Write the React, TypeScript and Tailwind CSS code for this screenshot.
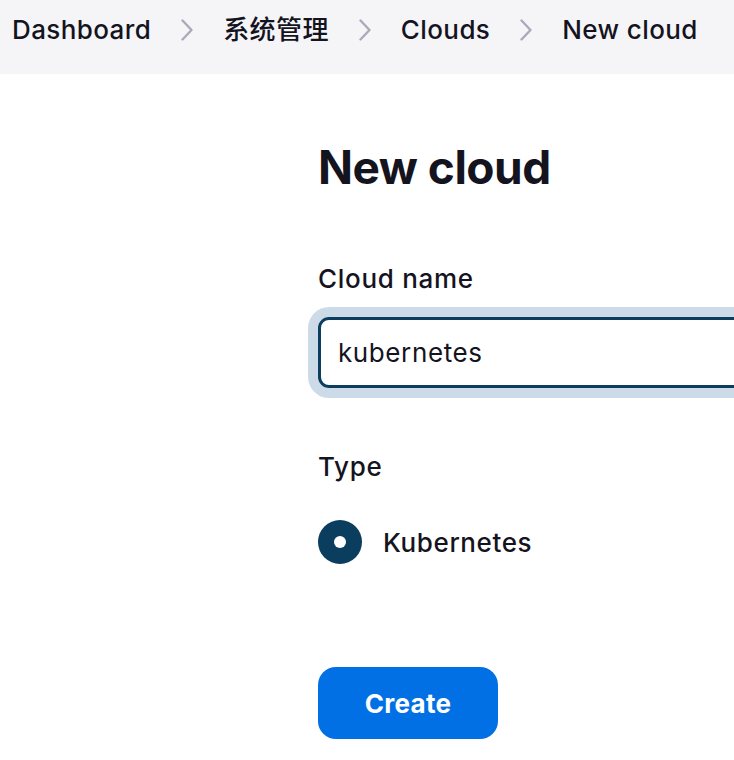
const crumbs = ["Dashboard", "系统管理", "Clouds", "New cloud"];

function Chevron() {
  return (
    <svg className="mx-[30px] h-[22px] w-[12px] text-[#abaabb]" viewBox="0 0 12 22" fill="none">
      <path d="M1.5 1.5 L10.5 11 L1.5 20.5" stroke="currentColor" strokeWidth="2.4" strokeLinecap="round" strokeLinejoin="round" />
    </svg>
  );
}

export default function App() {
  return (
    <div
      className="min-h-[760px] w-[734px] overflow-hidden bg-white text-[#14141f]"
      style={{ fontFamily: 'Inter, "Noto Sans CJK SC", sans-serif' }}
    >
      <div className="flex h-[74px] items-center bg-[#f5f5f7] pb-[15px] pl-3">
        {crumbs.map((c, i) => (
          <div key={c} className="flex items-center">
            {i > 0 && <Chevron />}
            <span className="text-[26px] font-medium leading-none tracking-[0.4px]">{c}</span>
          </div>
        ))}
      </div>

      <div className="pl-[318px] pt-[66px]">
        <h1 className="text-[46px] font-bold leading-[1.2] tracking-[-0.5px]">New cloud</h1>

        <label className="mt-[71px] block text-[26px] font-medium leading-none tracking-[0.7px]">
          Cloud name
        </label>
        <div className="mt-[25px] w-[560px]">
          <input
            defaultValue="kubernetes"
            className="h-[71px] w-full rounded-[11px] border-[3px] border-[#0b3d5f] px-[17px] text-[26px] tracking-[0.6px] shadow-[0_0_0_10px_#cddbe8] outline-none"
          />
        </div>

        <div className="mt-[66px] text-[26px] font-medium leading-none tracking-[0.7px]">Type</div>
        <div className="mt-[40px] flex items-center gap-[21px]">
          <span className="flex h-[44px] w-[44px] items-center justify-center rounded-full bg-[#0b3d5f]">
            <span className="h-[12px] w-[12px] rounded-full bg-white" />
          </span>
          <span className="text-[26px] font-medium tracking-[0.6px]">Kubernetes</span>
        </div>

        <button className="mt-[103px] h-[72px] w-[180px] rounded-[18px] bg-[#0170e5] text-[26px] font-bold tracking-[0.3px] text-white">
          Create
        </button>
      </div>
    </div>
  );
}
